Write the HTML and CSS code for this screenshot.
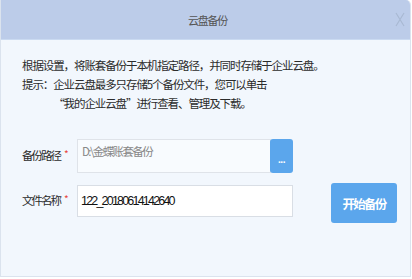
FILE: index.html
```html
<!DOCTYPE html>
<html lang="zh-CN">
<head>
  <meta charset="UTF-8">
  <title>云盘备份</title>
  <link rel="stylesheet" href="styles.css">
</head>
<body>
  <div class="dialog">
    <div class="dialog-header">
      <span></span>
      <span class="dialog-title">云盘备份</span>
      <button class="dialog-close" type="button">
        <svg width="10" height="15" viewBox="0 0 10 15">
          <path d="M1 1 L9 14 M9 1 L1 14" stroke="#a9b9d3" stroke-width="1.2" fill="none"/>
        </svg>
      </button>
    </div>
    <div class="dialog-body">
      <p class="intro">根据设置，将账套备份于本机指定路径，并同时存储于企业云盘。</p>
      <div class="tip">
        <span class="tip-label">提示：</span>
        <p>企业云盘最多只存储5个备份文件，您可以单击<br>“我的企业云盘”进行查看、管理及下载。</p>
      </div>

      <div class="backup-form">
        <div class="fields">
          <div class="form-group">
            <label>备份路径<em>*</em></label>
            <div class="path-box">D:\金蝶账套备份</div>
            <button class="browse-btn" type="button">...</button>
          </div>
          <div class="form-group">
            <label for="fileName">文件名称<em>*</em></label>
            <input type="text" id="fileName" value="122_20180614142640">
          </div>
        </div>
        <button class="start-btn" type="button">开始备份</button>
      </div>
    </div>
  </div>
</body>
</html>
```

FILE: styles.css
```css
body {
  margin: 0;
  background: #fff;
  font-family: "Noto Sans CJK SC", "Liberation Sans", sans-serif;
  color: #2b2b2b;
}

.dialog {
  width: 409px;
  height: 276px;
  border: 1px solid #dbe3ee;
  border-top: none;
  border-top-right-radius: 5px;
  background: #f2f7fd;
  overflow: hidden;
}

.dialog-header {
  height: 39px;
  border-bottom: 1px solid #cadaf1;
  background: #bccce9;
  display: grid;
  grid-template-columns: 1fr auto 1fr;
  align-items: center;
}

.dialog-title {
  font-size: 11px;
  letter-spacing: -1.3px;
  color: #555;
  padding-left: 4px;
}

.dialog-close {
  justify-self: end;
  margin-right: 5px;
  border: none;
  background: none;
  padding: 0;
  line-height: 0;
}

.dialog-body {
  padding: 16px 0 0 21px;
  font-size: 11.5px;
  letter-spacing: -1.1px;
  line-height: 19px;
}

.intro {
  margin: 0;
}

.tip {
  display: flex;
}

.tip p {
  margin: 0;
}

.backup-form {
  display: flex;
  align-items: flex-start;
  margin-top: 26px;
}

.fields {
  display: flex;
  flex-direction: column;
  gap: 12px;
}

.form-group {
  display: flex;
  align-items: center;
}

.form-group label {
  width: 55px;
  margin-top: -4px;
  letter-spacing: -2px;
}

.form-group label em {
  color: #e8453c;
  font-style: normal;
  font-size: 10px;
  margin-left: 4px;
  vertical-align: 2px;
}

.path-box {
  box-sizing: border-box;
  width: 194px;
  height: 34px;
  padding: 2px 4px;
  border: 1px solid #dfe3e9;
  background: #f8fbfe;
  color: #888;
  letter-spacing: -1.6px;
}

.browse-btn {
  width: 23px;
  height: 34px;
  margin-left: -1px;
  border: none;
  border-radius: 3px;
  background: #5ba6ec;
  color: #fff;
  font-size: 10px;
  font-weight: bold;
  padding: 6px 0 0;
  letter-spacing: -0.5px;
}

.form-group input {
  box-sizing: border-box;
  width: 216px;
  height: 32px;
  padding: 0 3px;
  border: 1px solid #d9dee5;
  background: #fff;
  font-family: "Liberation Sans", sans-serif;
  font-size: 12.5px;
  letter-spacing: -1.8px;
  color: #111;
  outline: none;
}

.start-btn {
  width: 66px;
  height: 40px;
  margin: 44px 0 0 38px;
  border: none;
  border-radius: 3px;
  background: #5ba6ec;
  color: #fff;
  font-family: "Noto Sans CJK SC", sans-serif;
  font-size: 12.5px;
  font-weight: bold;
  letter-spacing: -1.8px;
  padding: 0;
}
```
